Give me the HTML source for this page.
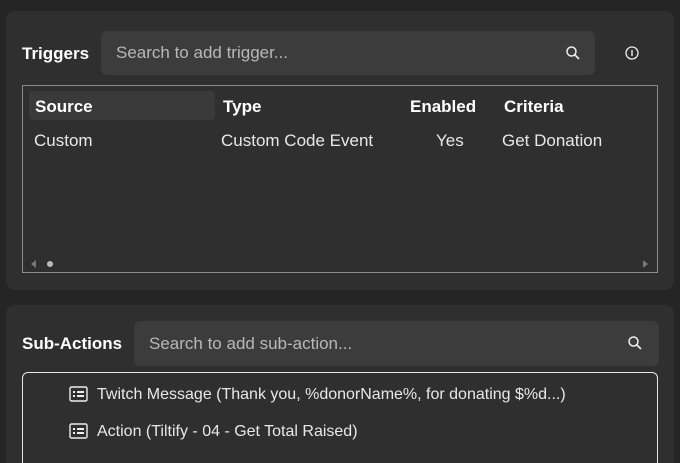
<!DOCTYPE html>
<html><head><meta charset="utf-8"><style>
*{box-sizing:border-box;margin:0;padding:0}
html{width:680px;height:463px;overflow:hidden;background:#252525}
body{width:680px;height:463px;background:#252525;font-family:"Liberation Sans",sans-serif;color:#e8e8e8;position:relative;overflow:hidden;font-size:17px}
.p{position:absolute;background:#2f2f2f;border-radius:9px}
.s{position:absolute;background:#3c3c3c;border-radius:6px;color:#b8b8b8;font-size:17px;padding-left:15px}
.b{font-weight:bold;color:#fff;position:absolute}
.t{position:absolute;white-space:nowrap}
</style></head><body>
<div class="p" style="left:6px;top:11px;width:668px;height:279px"></div>
<div class="b" style="left:22px;top:44px;font-size:17px">Triggers</div>
<div class="s" style="left:101px;top:31px;width:494px;height:44px;line-height:44px">Search to add trigger...</div>
<svg style="position:absolute;left:565px;top:45px" width="16" height="16" viewBox="0 0 16 16"><circle cx="6.5" cy="6.5" r="4.5" fill="none" stroke="#eee" stroke-width="1.5"/><line x1="10" y1="10" x2="14" y2="14" stroke="#eee" stroke-width="1.6"/></svg>
<svg style="position:absolute;left:624px;top:45px" width="16" height="16" viewBox="0 0 16 16"><circle cx="8" cy="8" r="6" fill="none" stroke="#eee" stroke-width="1.3"/><line x1="8" y1="5" x2="8" y2="11" stroke="#eee" stroke-width="1.4"/></svg>
<div style="position:absolute;left:22px;top:85px;width:636px;height:188px;border:1px solid #8a8a8a"></div>
<div style="position:absolute;left:29px;top:91px;width:186px;height:29px;background:#3a3a3a;border-radius:4px"></div>
<div class="b" style="left:35px;top:97px">Source</div>
<div class="b" style="left:223px;top:97px">Type</div>
<div class="b" style="left:410px;top:97px">Enabled</div>
<div class="b" style="left:504px;top:97px">Criteria</div>
<div class="t" style="left:34px;top:131px">Custom</div>
<div class="t" style="left:221px;top:131px">Custom Code Event</div>
<div class="t" style="left:436px;top:131px">Yes</div>
<div class="t" style="left:502px;top:131px">Get Donation</div>
<div style="position:absolute;left:31px;top:260px;width:0;height:0;border-top:4px solid transparent;border-bottom:4px solid transparent;border-right:5px solid #777"></div>
<div style="position:absolute;left:47px;top:261px;width:6px;height:6px;border-radius:50%;background:#bbb"></div>
<div style="position:absolute;left:643px;top:260px;width:0;height:0;border-top:4px solid transparent;border-bottom:4px solid transparent;border-left:5px solid #777"></div>
<div class="p" style="left:6px;top:305px;width:668px;height:170px"></div>
<div class="b" style="left:22px;top:334px">Sub-Actions</div>
<div class="s" style="left:134px;top:321px;width:525px;height:45px;line-height:45px">Search to add sub-action...</div>
<svg style="position:absolute;left:627px;top:335px" width="16" height="16" viewBox="0 0 16 16"><circle cx="6.5" cy="6.5" r="4.5" fill="none" stroke="#eee" stroke-width="1.5"/><line x1="10" y1="10" x2="14" y2="14" stroke="#eee" stroke-width="1.6"/></svg>
<div style="position:absolute;left:22px;top:372px;width:636px;height:110px;border:1px solid #e8e8e8;border-radius:6px"></div>
<svg style="position:absolute;left:69px;top:386px" width="20" height="17" viewBox="0 0 20 17"><rect x="1" y="1" width="17" height="14" rx="1.5" fill="none" stroke="#eee" stroke-width="1.4"/><rect x="4" y="5" width="2" height="2" fill="#eee"/><rect x="8" y="5" width="7" height="2" fill="#eee"/><rect x="4" y="9" width="2" height="2" fill="#eee"/><rect x="8" y="9" width="7" height="2" fill="#eee"/></svg>
<div class="t" style="left:97px;top:386px;font-size:16px">Twitch Message (Thank you, %donorName%, for donating $%d...)</div>
<svg style="position:absolute;left:69px;top:423px" width="20" height="17" viewBox="0 0 20 17"><rect x="1" y="1" width="17" height="14" rx="1.5" fill="none" stroke="#eee" stroke-width="1.4"/><rect x="4" y="5" width="2" height="2" fill="#eee"/><rect x="8" y="5" width="7" height="2" fill="#eee"/><rect x="4" y="9" width="2" height="2" fill="#eee"/><rect x="8" y="9" width="7" height="2" fill="#eee"/></svg>
<div class="t" style="left:97px;top:423px;font-size:16px">Action (Tiltify - 04 - Get Total Raised)</div>
</body></html>
